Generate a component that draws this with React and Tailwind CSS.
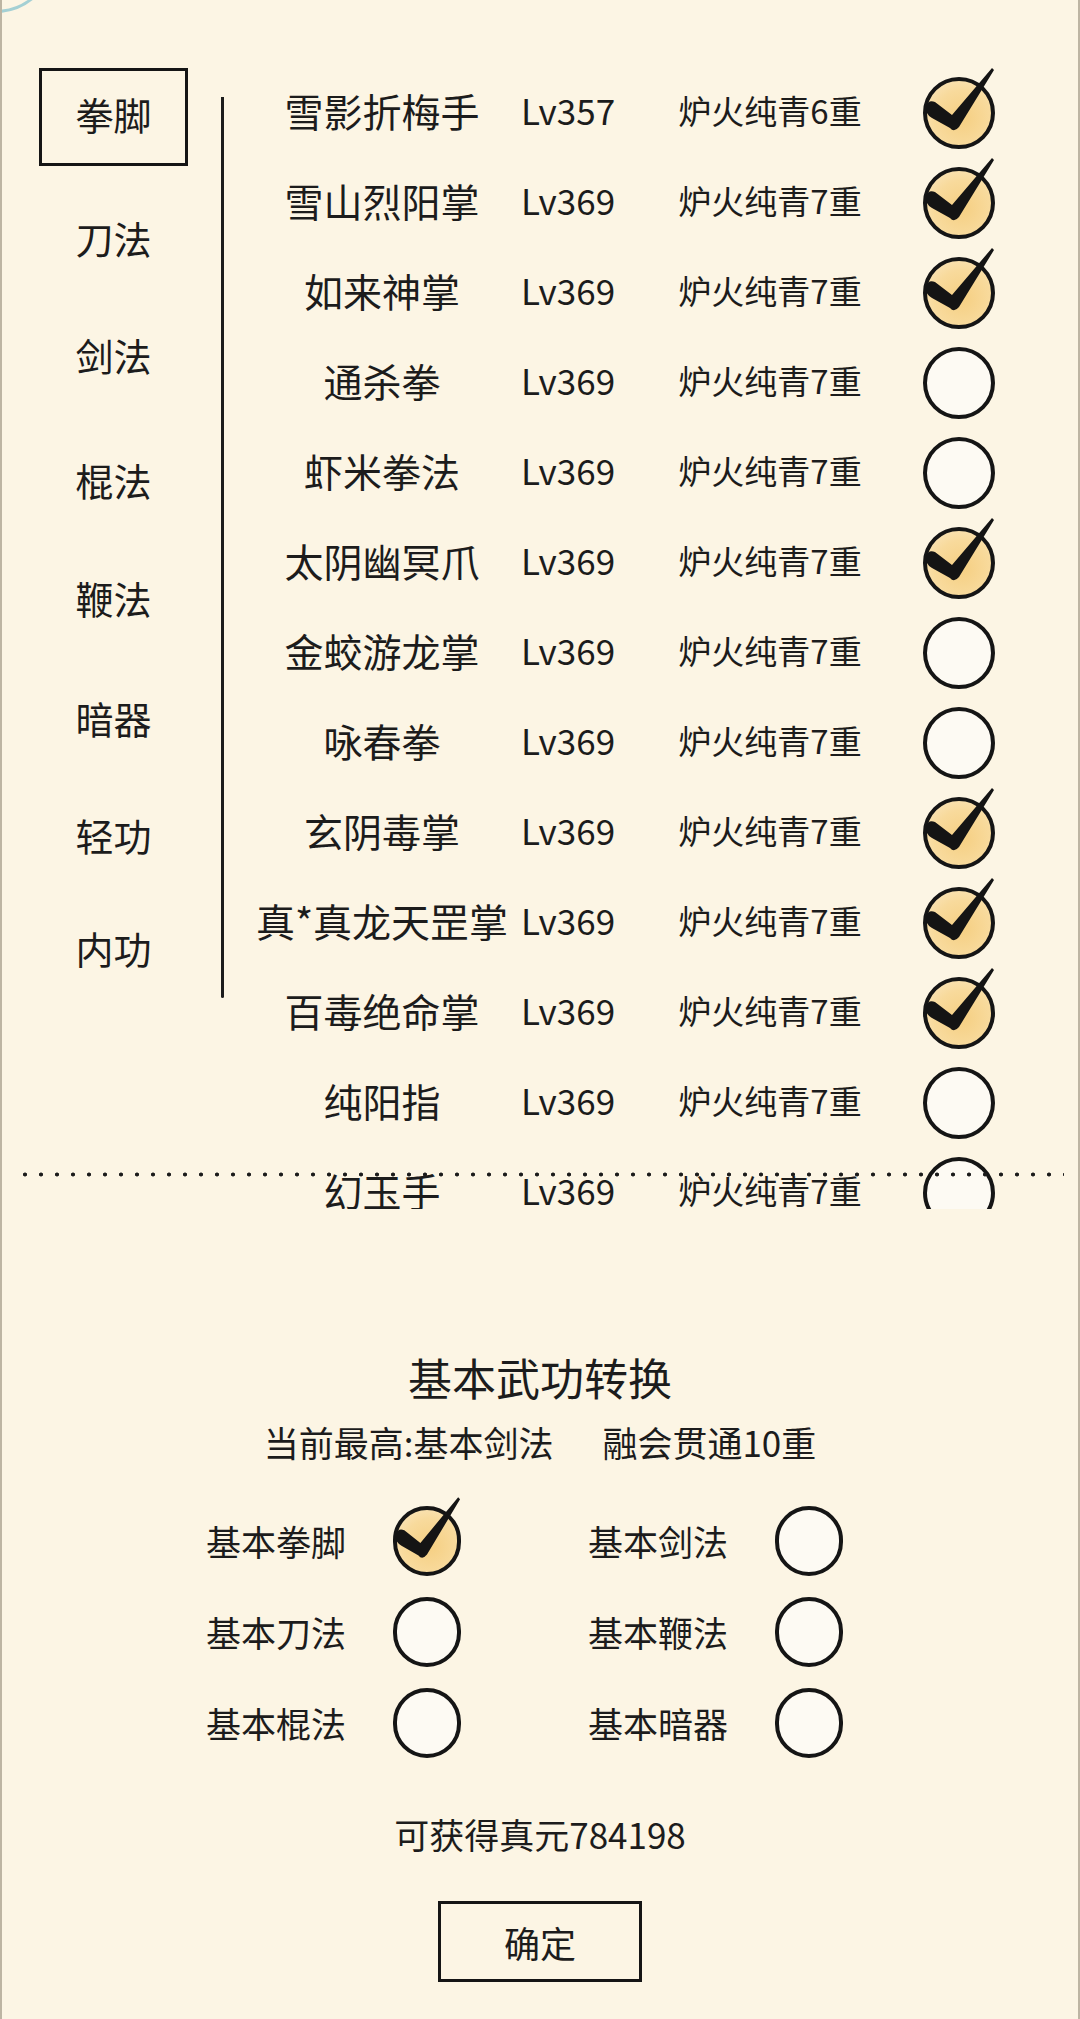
import React from "react";

const skills = [
  ["雪影折梅手", "Lv357", "炉火纯青6重", true],
  ["雪山烈阳掌", "Lv369", "炉火纯青7重", true],
  ["如来神掌", "Lv369", "炉火纯青7重", true],
  ["通杀拳", "Lv369", "炉火纯青7重", false],
  ["虾米拳法", "Lv369", "炉火纯青7重", false],
  ["太阴幽冥爪", "Lv369", "炉火纯青7重", true],
  ["金蛟游龙掌", "Lv369", "炉火纯青7重", false],
  ["咏春拳", "Lv369", "炉火纯青7重", false],
  ["玄阴毒掌", "Lv369", "炉火纯青7重", true],
  ["真*真龙天罡掌", "Lv369", "炉火纯青7重", true],
  ["百毒绝命掌", "Lv369", "炉火纯青7重", true],
  ["纯阳指", "Lv369", "炉火纯青7重", false],
  ["幻玉手", "Lv369", "炉火纯青7重", false],
];

const tabs = [
  ["刀法", "mt-[22px]"],
  ["剑法", "mt-[17px]"],
  ["棍法", "mt-[25px]"],
  ["鞭法", "mt-[18px]"],
  ["暗器", "mt-[20px]"],
  ["轻功", "mt-[17px]"],
  ["内功", "mt-[13px]"],
];

const basics = [
  ["基本拳脚", true, "基本剑法", false],
  ["基本刀法", false, "基本鞭法", false],
  ["基本棍法", false, "基本暗器", false],
];

function CheckMark() {
  return (
    <svg
      className="absolute left-0 top-0 overflow-visible"
      width="100%"
      height="100%"
      viewBox="0 0 72 72"
      preserveAspectRatio="none"
    >
      <path
        d="M3,30 Q5,22 12,25 L29,38 L69,-9 L71,-7 L36,50 Q31,56 27,51 L9,41 Q2,37 3,30 Z"
        fill="#141414"
      />
    </svg>
  );
}

function Circle({ checked, w, h }) {
  return (
    <div className={`relative ${w} ${h}`}>
      <div
        className={
          checked
            ? "absolute inset-0 rounded-full border-[4px] border-[#151515] bg-[radial-gradient(circle_at_55%_58%,#f5cf82_0%,#f8da9c_55%,#fbe9c6_100%)]"
            : "absolute inset-0 rounded-full border-[4px] border-[#151515] bg-[#fdfaf3]"
        }
      />
      {checked && <CheckMark />}
    </div>
  );
}

export default function App() {
  return (
    <div className="relative w-[1080px] h-[2019px] overflow-hidden bg-[#fcf5e4] border-x-2 border-[#bdb5a3] text-[#1c1c1c] font-['Noto_Sans_CJK_SC','Noto_Sans',sans-serif]">
      {/* corner arc */}
      <div className="absolute left-[-68px] top-[-109px] w-[122px] h-[122px] rounded-full border-[3px] border-[#a4d0d4]" />

      {/* top section */}
      <div className="flex h-[1209px]">
        {/* tabs */}
        <div className="w-[219px] shrink-0 pt-[68px] flex flex-col">
          <div className="ml-[37px] w-[149px] h-[98px] pb-[6px] border-[3px] border-[#151515] flex items-center justify-center text-[38px] leading-none">
            拳脚
          </div>
          {tabs.map(([t, m]) => (
            <div
              key={t}
              className={`${m} ml-[37px] w-[149px] h-[100px] flex items-center justify-center text-[38px] leading-none`}
            >
              {t}
            </div>
          ))}
        </div>

        {/* divider */}
        <div className="w-[3px] shrink-0 h-[901px] mt-[97px] bg-[#1c1c1c] rounded-b-full" />

        {/* list */}
        <div className="flex-1 pt-[68px] pl-[21px] overflow-hidden">
          {skills.map(([name, lv, lvl, checked], i) => (
            <div key={i} className="flex items-center h-[90px]">
              <div className="w-[274px] h-[32px] mb-[6px] text-center text-[39px] leading-[32px] whitespace-nowrap">
                {name}
              </div>
              <div className="w-[98px] h-[32px] mb-[6px] text-center text-[35px] leading-[32px]">
                {lv}
              </div>
              <div className="w-[53px]" />
              <div className="w-[200px] h-[32px] mb-[6px] text-center text-[33px] leading-[32px] whitespace-nowrap">
                {lvl}
              </div>
              <div className="w-[52px]" />
              <div className="w-[74px] flex justify-center">
                <Circle checked={checked} w="w-[72px]" h="h-[72px]" />
              </div>
            </div>
          ))}
        </div>
      </div>

      {/* dotted separator */}
      <div className="absolute left-[15px] right-[14px] top-[1172px] h-[5px] bg-[radial-gradient(circle,#1c1c1c_1.7px,transparent_2.3px)] bg-[length:16px_5px]" />

      {/* bottom section */}
      <div className="flex flex-col items-center">
        <div className="mt-[140px] h-[60px] pb-[4px] flex items-center text-[44px] leading-none">
          基本武功转换
        </div>
        <div className="mt-[8px] h-[50px] pb-[2px] flex items-center gap-[49px] text-[35px] leading-none">
          <span>当前最高:基本剑法</span>
          <span>融会贯通10重</span>
        </div>

        <div className="mt-[28px] self-start ml-[204px] flex flex-col">
          {basics.map(([a, ac, b, bc]) => (
            <div key={a} className="h-[91px] flex items-center">
              <div className="w-[142px] text-[35px] leading-none whitespace-nowrap">{a}</div>
              <div className="w-[45px]" />
              <Circle checked={ac} w="w-[68px]" h="h-[70px]" />
              <div className="w-[127px]" />
              <div className="w-[142px] text-[35px] leading-none whitespace-nowrap">{b}</div>
              <div className="w-[45px]" />
              <Circle checked={bc} w="w-[68px]" h="h-[70px]" />
            </div>
          ))}
        </div>

        <div className="mt-[41px] h-[50px] pb-[2px] flex items-center text-[35px] leading-none">
          可获得真元784198
        </div>

        <div className="mt-[42px] w-[204px] h-[81px] border-[3px] border-[#151515] flex items-center justify-center text-[36px] leading-none">
          确定
        </div>
      </div>
    </div>
  );
}
